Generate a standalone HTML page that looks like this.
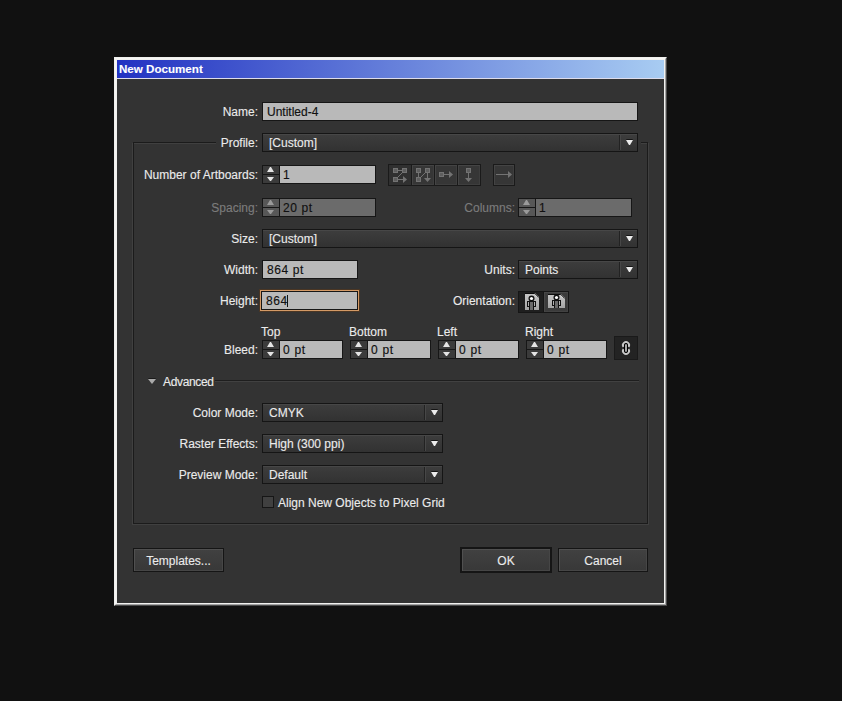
<!DOCTYPE html>
<html><head><meta charset="utf-8">
<style>
html,body{margin:0;padding:0;}
body{width:842px;height:701px;background:#111;position:relative;overflow:hidden;font-family:"Liberation Sans",sans-serif;}
.a{position:absolute;box-sizing:border-box;}
.t{position:absolute;font-size:12px;line-height:14px;white-space:nowrap;color:#ebebeb;-webkit-text-stroke:0.12px currentColor;}
.r{text-align:right;}
.dis{color:#7c7c7c;}
.inp{position:absolute;box-sizing:border-box;border:1px solid #161616;background:#b9b9b9;}
.inp.d{background:#6b6b6b;}
.inp span{position:absolute;left:4px;top:2px;font-size:12px;line-height:14px;color:#101010;white-space:nowrap;-webkit-text-stroke:0.15px currentColor;}
.dd{position:absolute;box-sizing:border-box;border:1px solid #151515;background:linear-gradient(#3d3d3d,#323232);box-shadow:inset 0 1px 0 #474747;}
.dd span{position:absolute;left:6px;top:2px;font-size:12px;line-height:14px;color:#ebebeb;white-space:nowrap;-webkit-text-stroke:0.12px currentColor;}
.dd i{position:absolute;right:16px;top:1px;bottom:1px;width:1px;background:#222;border-right:1px solid #474747;}
.dd b{position:absolute;right:4px;top:6px;width:1px;height:0;border-left:3px solid transparent;border-right:3px solid transparent;border-top:5px solid #ececec;filter:drop-shadow(0 -1px 0 #151515);}
.sp{position:absolute;box-sizing:border-box;border:1px solid #161616;background:#161616;}
.sp .bt{position:absolute;left:0;width:16px;background:#3b3b3b;}
.sp .up{top:0;height:8px;}
.sp .dn{top:9px;height:8px;}
.sp .f{position:absolute;left:17px;right:0;top:0;bottom:0;background:#b9b9b9;}
.sp .f span{position:absolute;left:3px;top:2px;font-size:12px;line-height:14px;color:#101010;white-space:nowrap;-webkit-text-stroke:0.15px currentColor;}
.sp .tu{position:absolute;left:4px;top:1px;width:1px;height:0;border-left:3px solid transparent;border-right:3px solid transparent;border-bottom:5px solid #e4e4e4;}
.sp .td{position:absolute;left:4px;top:2px;width:1px;height:0;border-left:3px solid transparent;border-right:3px solid transparent;border-top:4px solid #e4e4e4;}
.sp.d .bt{background:#575757;}
.sp.d .f{background:#6b6b6b;}
.sp.d .tu{border-bottom-color:#9a9a9a;}
.sp.d .td{border-top-color:#9a9a9a;}
.btn{position:absolute;box-sizing:border-box;border:1px solid #151515;background:linear-gradient(#414141,#383838);box-shadow:inset 1px 1px 0 #505050,inset -1px -1px 0 #464646;text-align:center;font-size:12px;line-height:22px;padding-top:1px;color:#ebebeb;-webkit-text-stroke:0.12px currentColor;}
</style></head><body>

<!-- window frame -->
<div class="a" style="left:114px;top:57px;width:553px;height:549px;border:1px solid;border-color:#f0f0ee #4a4a4a #4a4a4a #f0f0ee;"></div>
<div class="a" style="left:115px;top:58px;width:551px;height:547px;border:1px solid;border-color:#f6f6f4 #a4a4a4 #a4a4a4 #f6f6f4;"></div>
<div class="a" style="left:116px;top:59px;width:549px;height:545px;border:1px solid #f2f2f0;"></div>
<div class="a" style="left:117px;top:60px;width:547px;height:18px;background:linear-gradient(90deg,#2232c2,#a8ccf2);"></div>
<div class="a" style="left:117px;top:78px;width:547px;height:1px;background:#dcdcec;"></div>
<div class="a" style="left:117px;top:79px;width:547px;height:524px;background:#333;"></div>
<div class="t" style="left:119px;top:62px;font-size:11.6px;font-weight:bold;color:#fff;">New Document</div>

<!-- group box -->
<div class="a" style="left:132px;top:143px;width:517px;height:382px;border:1px solid #404040;"></div>
<div class="a" style="left:133px;top:142px;width:515px;height:382px;border:1px solid #1b1b1b;"></div>
<div class="a" style="left:216px;top:138px;width:425px;height:10px;background:#333;"></div>

<!-- labels left column -->
<div class="t r" style="right:584px;top:105px;">Name:</div>
<div class="t r" style="right:584px;top:136px;">Profile:</div>
<div class="t r" style="right:584px;top:168px;">Number of Artboards:</div>
<div class="t r dis" style="right:584px;top:201px;">Spacing:</div>
<div class="t r" style="right:584px;top:232px;">Size:</div>
<div class="t r" style="right:584px;top:263px;">Width:</div>
<div class="t r" style="right:584px;top:294px;">Height:</div>
<div class="t r" style="right:584px;top:343px;">Bleed:</div>
<div class="t r dis" style="right:327px;top:201px;">Columns:</div>
<div class="t r" style="right:327px;top:263px;">Units:</div>
<div class="t r" style="right:327px;top:294px;">Orientation:</div>

<!-- Name -->
<div class="inp" style="left:262px;top:102px;width:376px;height:19px;"><span>Untitled-4</span></div>
<!-- Profile -->
<div class="dd" style="left:262px;top:133px;width:376px;height:19px;"><span>[Custom]</span><i></i><b></b></div>

<!-- Artboards -->
<div class="sp" style="left:262px;top:165px;width:114px;height:19px;"><div class="bt up"><div class="tu"></div></div><div class="bt dn"><div class="td"></div></div><div class="f"><span>1</span></div></div>

<!-- Spacing -->
<div class="sp d" style="left:262px;top:198px;width:114px;height:19px;"><div class="bt up"><div class="tu"></div></div><div class="bt dn"><div class="td"></div></div><div class="f"><span style="letter-spacing:0.6px">20 pt</span></div></div>
<!-- Columns -->
<div class="sp d" style="left:518px;top:198px;width:114px;height:19px;"><div class="bt up"><div class="tu"></div></div><div class="bt dn"><div class="td"></div></div><div class="f"><span>1</span></div></div>

<!-- Size -->
<div class="dd" style="left:262px;top:229px;width:376px;height:19px;"><span>[Custom]</span><i></i><b></b></div>

<!-- Width -->
<div class="inp" style="left:262px;top:260px;width:96px;height:19px;"><span style="letter-spacing:0.6px">864 pt</span></div>
<!-- Units -->
<div class="dd" style="left:518px;top:260px;width:120px;height:19px;"><span>Points</span><i></i><b></b></div>

<!-- Height -->
<div class="a" style="left:260px;top:290px;width:99px;height:21px;border:1px solid #d49a66;box-shadow:0 0 0 1px #4a3624;"></div>
<div class="inp" style="left:261px;top:291px;width:97px;height:19px;"><span style="letter-spacing:0.6px">864</span></div>
<div class="a" style="left:287px;top:295px;width:1px;height:12px;background:#111;"></div>

<!-- Bleed headers -->
<div class="t" style="left:261px;top:325px;">Top</div>
<div class="t" style="left:349px;top:325px;">Bottom</div>
<div class="t" style="left:437px;top:325px;">Left</div>
<div class="t" style="left:525px;top:325px;">Right</div>

<div class="sp" style="left:262px;top:340px;width:81px;height:19px;"><div class="bt up"><div class="tu"></div></div><div class="bt dn"><div class="td"></div></div><div class="f"><span style="letter-spacing:0.7px">0 pt</span></div></div>
<div class="sp" style="left:350px;top:340px;width:81px;height:19px;"><div class="bt up"><div class="tu"></div></div><div class="bt dn"><div class="td"></div></div><div class="f"><span style="letter-spacing:0.7px">0 pt</span></div></div>
<div class="sp" style="left:438px;top:340px;width:81px;height:19px;"><div class="bt up"><div class="tu"></div></div><div class="bt dn"><div class="td"></div></div><div class="f"><span style="letter-spacing:0.7px">0 pt</span></div></div>
<div class="sp" style="left:526px;top:340px;width:81px;height:19px;"><div class="bt up"><div class="tu"></div></div><div class="bt dn"><div class="td"></div></div><div class="f"><span style="letter-spacing:0.7px">0 pt</span></div></div>

<!-- link button -->
<div class="a" style="left:614px;top:336px;width:24px;height:24px;background:#232323;border:1px solid #1a1a1a;"></div>
<svg class="a" style="left:614px;top:336px;" width="24" height="24" viewBox="0 0 24 24">
<path d="M9.6,10.9 A3,3 0 1 1 14.4,10.9" fill="none" stroke="#c8c8c8" stroke-width="2"/>
<path d="M9.6,13.1 A3,3 0 1 0 14.4,13.1" fill="none" stroke="#c8c8c8" stroke-width="2"/>
<rect x="10.5" y="7.5" width="3" height="9" rx="1.5" fill="#a8a8a8" stroke="#000"/>
</svg>


<!-- artboard arrangement buttons -->
<div class="a" style="left:388px;top:164px;width:24px;height:22px;border:1px solid #1a1a1a;background:#303030;"></div>
<div class="a" style="left:411px;top:164px;width:24px;height:22px;border:1px solid #1a1a1a;background:#363636;box-shadow:inset 1px 1px 0 #444,inset -1px -1px 0 #3e3e3e;"></div>
<div class="a" style="left:434px;top:164px;width:24px;height:22px;border:1px solid #1a1a1a;background:#363636;box-shadow:inset 1px 1px 0 #444,inset -1px -1px 0 #3e3e3e;"></div>
<div class="a" style="left:457px;top:164px;width:24px;height:22px;border:1px solid #1a1a1a;background:#363636;box-shadow:inset 1px 1px 0 #444,inset -1px -1px 0 #3e3e3e;"></div>
<div class="a" style="left:493px;top:164px;width:22px;height:22px;border:1px solid #1a1a1a;background:#363636;box-shadow:inset 1px 1px 0 #444,inset -1px -1px 0 #3e3e3e;"></div>
<svg class="a" style="left:388px;top:164px;" width="24" height="22" viewBox="0 0 24 22">
<g fill="#5e5e5e" stroke="#737373" stroke-width="1" shape-rendering="crispEdges">
<rect x="5.5" y="4.5" width="4" height="4"/><rect x="14.5" y="4.5" width="4" height="4"/><rect x="5.5" y="13.5" width="4" height="4"/>
<line x1="10" y1="6.5" x2="14" y2="6.5"/><line x1="10" y1="15.5" x2="17" y2="15.5"/></g>
<line x1="10" y1="13" x2="14" y2="9" stroke="#737373"/>
<polygon points="15,12 19,15.5 15,19" fill="#737373"/>
</svg>
<svg class="a" style="left:411px;top:164px;" width="24" height="22" viewBox="0 0 24 22">
<g fill="#5e5e5e" stroke="#737373" stroke-width="1" shape-rendering="crispEdges">
<rect x="5.5" y="4.5" width="4" height="4"/><rect x="14.5" y="4.5" width="4" height="4"/><rect x="5.5" y="13.5" width="4" height="4"/>
<line x1="7.5" y1="9" x2="7.5" y2="13"/><line x1="16.5" y1="9" x2="16.5" y2="15"/></g>
<line x1="10" y1="13" x2="14" y2="9" stroke="#737373"/>
<polygon points="13,14 20,14 16.5,18" fill="#737373"/>
</svg>
<svg class="a" style="left:434px;top:164px;" width="24" height="22" viewBox="0 0 24 22">
<g fill="#5e5e5e" stroke="#737373" stroke-width="1" shape-rendering="crispEdges">
<rect x="5.5" y="8.5" width="4" height="4"/><line x1="10" y1="10.5" x2="16" y2="10.5"/></g>
<polygon points="15,7 19,10.5 15,14" fill="#737373"/>
</svg>
<svg class="a" style="left:457px;top:164px;" width="24" height="22" viewBox="0 0 24 22">
<g fill="#5e5e5e" stroke="#737373" stroke-width="1" shape-rendering="crispEdges">
<rect x="9.5" y="4.5" width="4" height="4"/><line x1="11.5" y1="9" x2="11.5" y2="15"/></g>
<polygon points="8,14 15,14 11.5,18" fill="#737373"/>
</svg>
<svg class="a" style="left:493px;top:164px;" width="22" height="22" viewBox="0 0 22 22">
<line x1="3" y1="10.5" x2="16" y2="10.5" stroke="#737373" shape-rendering="crispEdges"/>
<polygon points="15,7 19,10.5 15,14" fill="#737373"/>
</svg>

<!-- orientation -->
<div class="a" style="left:518px;top:291px;width:26px;height:22px;border:1px solid #161616;background:#1f1f1f;"></div>
<div class="a" style="left:543px;top:291px;width:26px;height:22px;border:1px solid #161616;background:#3b3b3b;box-shadow:inset 1px 1px 0 #474747,inset -1px -1px 0 #424242;"></div>
<svg class="a" style="left:518px;top:291px;" width="26" height="22" viewBox="0 0 26 22">
<defs><linearGradient id="pg" x1="0" y1="0" x2="0" y2="1"><stop offset="0" stop-color="#c8c8c8"/><stop offset="1" stop-color="#a4a4a4"/></linearGradient></defs>
<path d="M7,2 H17 L21,6 V19 H7 Z" fill="url(#pg)"/>
<path d="M7,2.5 H16.8 L20.5,6.2" fill="none" stroke="#0c0c0c"/>
<path d="M17,3.6 L19.4,6 Q17.2,6.2 17,3.6 Z" fill="#e4e4e4"/>
<g shape-rendering="crispEdges"><rect x="9" y="10" width="9" height="6" fill="#111"/><rect x="10" y="11" width="7" height="4" fill="#b0b0b0"/><rect x="11" y="10" width="5" height="9" fill="#111"/><rect x="12" y="11" width="3" height="8" fill="#6a6a6a"/></g>
<circle cx="13.5" cy="7.5" r="3" fill="#111"/><circle cx="13.5" cy="7.5" r="1.6" fill="#fff"/>
</svg>
<svg class="a" style="left:543px;top:291px;" width="26" height="22" viewBox="0 0 26 22">
<path d="M5,3 H18 L22,7 V17 H5 Z" fill="url(#pg)"/>
<path d="M5,3.5 H17.8 L21.5,7.2" fill="none" stroke="#0c0c0c"/>
<path d="M18,4.6 L20.4,7 Q18.2,7.2 18,4.6 Z" fill="#e4e4e4"/>
<g shape-rendering="crispEdges"><rect x="9" y="9" width="9" height="6" fill="#111"/><rect x="10" y="10" width="7" height="4" fill="#b0b0b0"/><rect x="11" y="9" width="5" height="8" fill="#111"/><rect x="12" y="10" width="3" height="7" fill="#6a6a6a"/></g>
<circle cx="13.5" cy="6.5" r="3" fill="#111"/><circle cx="13.5" cy="6.5" r="1.6" fill="#fff"/>
</svg>

<!-- Advanced -->
<div class="a" style="left:148px;top:379px;width:1px;height:0;border-left:4px solid transparent;border-right:4px solid transparent;border-top:5px solid #aaaaaa;filter:drop-shadow(0 -1px 0 #1a1a1a);"></div>
<div class="t" style="left:163px;top:375px;letter-spacing:-0.35px;">Advanced</div>
<div class="a" style="left:215px;top:380px;width:424px;height:1px;background:#1e1e1e;"></div>
<div class="a" style="left:215px;top:381px;width:424px;height:1px;background:#414141;"></div>

<div class="t r" style="right:584px;top:406px;">Color Mode:</div>
<div class="t r" style="right:584px;top:437px;">Raster Effects:</div>
<div class="t r" style="right:584px;top:468px;">Preview Mode:</div>

<div class="dd" style="left:262px;top:403px;width:181px;height:19px;"><span>CMYK</span><i></i><b></b></div>
<div class="dd" style="left:262px;top:434px;width:181px;height:19px;"><span>High (300 ppi)</span><i></i><b></b></div>
<div class="dd" style="left:262px;top:465px;width:181px;height:19px;"><span>Default</span><i></i><b></b></div>

<div class="a" style="left:262px;top:496px;width:12px;height:12px;border:1px solid #161616;background:#404040;"></div>
<div class="t" style="left:278px;top:496px;">Align New Objects to Pixel Grid</div>

<!-- buttons -->
<div class="btn" style="left:133px;top:548px;width:91px;height:24px;">Templates...</div>
<div class="btn" style="left:460px;top:547px;width:92px;height:26px;border-width:2px;">OK</div>
<div class="btn" style="left:558px;top:548px;width:90px;height:24px;">Cancel</div>

</body></html>
